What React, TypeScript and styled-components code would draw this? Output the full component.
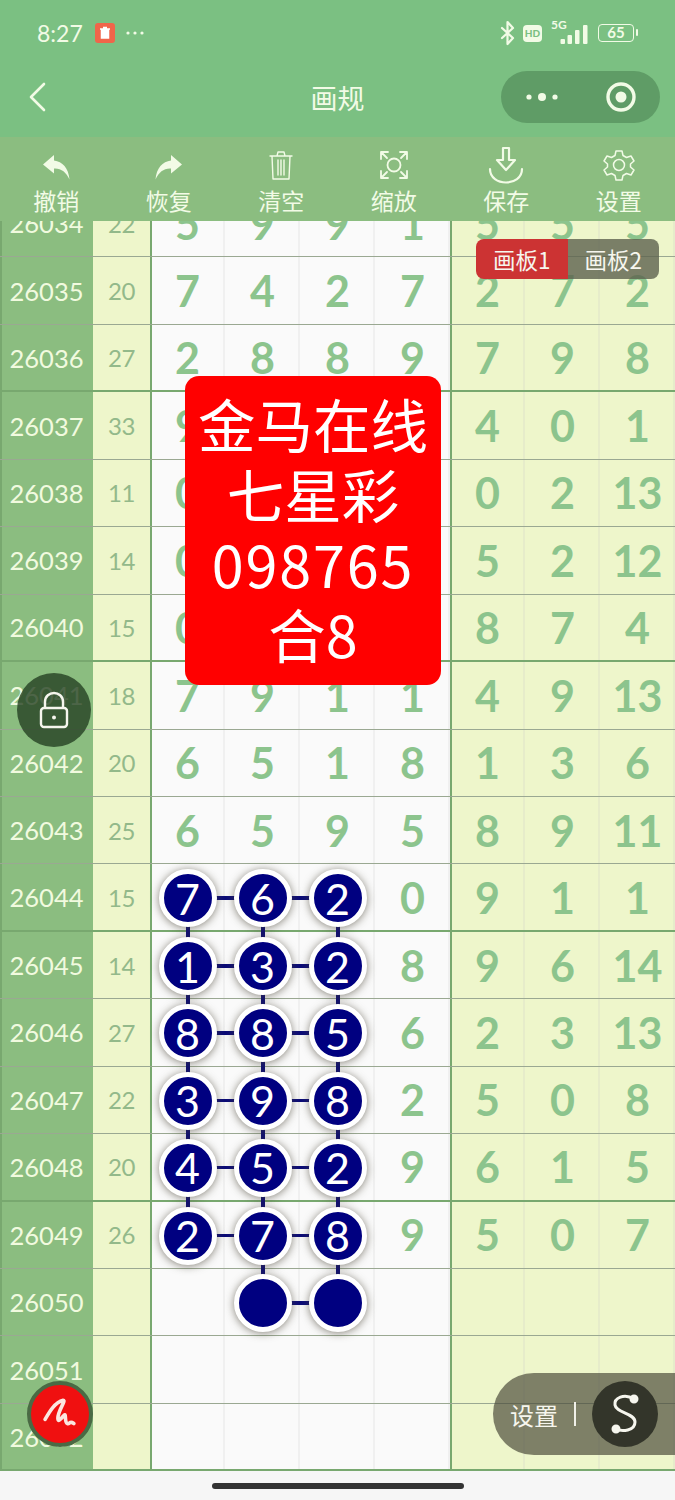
import React from 'react';
import styled, { createGlobalStyle } from 'styled-components';

const CJK = '"Noto Sans CJK SC", "Noto Sans", sans-serif';
const NUM = 'Lato, "Noto Sans CJK SC", sans-serif';

const GlobalStyle = createGlobalStyle`
  html, body { margin: 0; padding: 0; background: #f6f6f6; }
  * { box-sizing: border-box; }
`;

const Page = styled.div`
  position: relative;
  width: 675px;
  height: 1500px;
  display: flex;
  flex-direction: column;
  overflow: hidden;
  font-family: ${CJK};
`;

const Header = styled.header`
  height: 137px;
  background: #7bc082;
  color: #f2fbe6;
  display: flex;
  flex-direction: column;
`;

const StatusBar = styled.div`
  height: 68px;
  padding: 0 41px 2px 37px;
  display: flex;
  align-items: center;
  justify-content: space-between;
`;

const StatusGroup = styled.div`
  display: flex;
  align-items: center;
`;

const Time = styled.span`
  font: 400 23px ${NUM};
  margin-right: 12px;
`;

const NavBar = styled.div`
  height: 60px;
  padding: 0 15px 2px 29px;
  display: flex;
  align-items: center;
  justify-content: space-between;
  position: relative;
`;

const Title = styled.h1`
  margin: 0;
  font: 400 27px ${CJK};
  position: absolute;
  left: 0;
  right: 0;
  text-align: center;
  pointer-events: none;
`;

const Capsule = styled.div`
  width: 159px;
  height: 52px;
  border-radius: 26px;
  background: #5f9c66;
  display: flex;
  align-items: center;
  justify-content: space-between;
  padding: 0 24px;
`;

const Toolbar = styled.nav`
  height: 84px;
  background: #8bbd80;
  display: grid;
  grid-template-columns: repeat(6, 1fr);
`;

const ToolButton = styled.div`
  display: flex;
  flex-direction: column;
  align-items: center;
  color: #f2fbe6;
`;

const ToolIcon = styled.div`
  height: 49px;
  padding-top: 6px;
  display: flex;
  align-items: center;
  justify-content: center;
`;

const ToolLabel = styled.span`
  font: 400 23px/29px ${CJK};
`;

const Board = styled.main`
  position: relative;
  flex: 1;
  overflow: hidden;
  background: #fafafa;
`;

const Rows = styled.div`
  margin-top: -31px;
`;

const Row = styled.div<{ $thick: boolean }>`
  height: 67.44px;
  display: grid;
  grid-template-columns: 93px 57px repeat(7, 75px);
  border-bottom: ${p => (p.$thick ? '2px solid #78a86f' : '1px solid #9aa892')};
`;

const IdCell = styled.div`
  background: #8bbd80;
  color: #f1fadf;
  font: 400 25.5px ${NUM};
  display: flex;
  align-items: center;
  justify-content: center;
  box-shadow: inset 2px 0 0 #78a86f;
`;

const SumCell = styled.div`
  background: #eef6cb;
  color: #93b98a;
  font: 400 24px ${NUM};
  letter-spacing: -0.5px;
  display: flex;
  align-items: center;
  justify-content: center;
`;

const Cell = styled.div<{ $yellow?: boolean; $edge?: boolean }>`
  position: relative;
  background: ${p => (p.$yellow ? '#eef6cb' : '#fafafa')};
  color: #8cc48d;
  font: 700 43px ${NUM};
  display: flex;
  align-items: center;
  justify-content: center;
  box-shadow: ${p => (p.$edge ? 'inset 2px 0 0 #78a86f, ' : '')}inset -2px 0 0 ${p => (p.$yellow ? '#e6ecca' : '#f0f0f0')};
`;

const Ball = styled.div`
  position: absolute;
  left: 50%;
  top: 50%;
  width: 58px;
  height: 58px;
  margin: -28px 0 0 -29px;
  border-radius: 50%;
  background: #000080;
  border: 5px solid #fff;
  box-shadow: 0 1px 8px rgba(70, 66, 50, 0.65);
  color: #fff;
  font: 400 43px ${NUM};
  display: flex;
  align-items: center;
  justify-content: center;
  z-index: 2;
`;

const LinkRight = styled.i`
  position: absolute;
  left: 50%;
  top: 50%;
  width: 75px;
  height: 3.5px;
  margin-top: -1px;
  background: #0c0c78;
  z-index: 1;
`;

const LinkUp = styled.i`
  position: absolute;
  left: 50%;
  bottom: 50%;
  width: 3.5px;
  height: 67px;
  margin-left: -1.5px;
  background: #0c0c78;
  z-index: 1;
`;

const BoardTabs = styled.div`
  position: absolute;
  top: 18px;
  right: 16px;
  width: 183px;
  height: 40px;
  display: flex;
  border-radius: 8px;
  overflow: hidden;
  z-index: 3;
`;

const BoardTab = styled.div<{ $active?: boolean }>`
  flex: 1;
  background: ${p => (p.$active ? '#cc3333' : 'rgba(92, 98, 78, 0.8)')};
  color: #f6f6ee;
  font: 400 22.5px ${CJK};
  display: flex;
  align-items: center;
  justify-content: center;
`;

const Notice = styled.div`
  position: absolute;
  left: 185px;
  top: 155px;
  width: 256px;
  height: 309px;
  padding-top: 12px;
  background: #ff0000;
  border-radius: 14px;
  color: #fff;
  font: 400 57.5px/70px ${CJK};
  text-align: center;
  z-index: 4;
`;

const NoticeDigits = styled.span`
  letter-spacing: 1.8px;
`;

const LockButton = styled.div`
  position: absolute;
  left: 17px;
  top: 452px;
  width: 74px;
  height: 74px;
  border-radius: 50%;
  background: rgba(36, 64, 34, 0.8);
  display: flex;
  align-items: center;
  justify-content: center;
  z-index: 4;
`;

const PenButton = styled.div`
  position: absolute;
  left: 27px;
  top: 1160px;
  width: 66px;
  height: 66px;
  border-radius: 50%;
  background: #f01010;
  border: 4px solid #4a6a44;
  display: flex;
  align-items: center;
  justify-content: center;
  z-index: 4;
`;

const SettingsPill = styled.div`
  position: absolute;
  right: 0;
  top: 1152px;
  width: 182px;
  height: 82px;
  border-radius: 41px 0 0 41px;
  background: rgba(72, 72, 56, 0.68);
  display: flex;
  align-items: center;
  padding: 0 16px 0 17px;
  color: #f6f6ee;
  font: 400 24px ${CJK};
  z-index: 4;
`;

const PillRule = styled.span`
  width: 2px;
  height: 24px;
  margin: 0 16px;
  background: #f0f0e8;
`;

const PillIcon = styled.div`
  width: 66px;
  height: 66px;
  border-radius: 50%;
  background: #33352a;
  display: flex;
  align-items: center;
  justify-content: center;
`;

const HomeBar = styled.footer`
  height: 29px;
  background: #f6f6f6;
  display: flex;
  align-items: center;
  justify-content: center;
`;

const HomeIndicator = styled.div`
  width: 252px;
  height: 6px;
  border-radius: 3px;
  background: #333;
`;

const HdBadge = styled.span`
  width: 19px;
  height: 17px;
  margin: 0 9px 0 8px;
  border-radius: 4px;
  background: #f2fbe6;
  color: #7bc082;
  font: 900 10px/17px ${NUM};
  text-align: center;
`;

const Signal = styled.div`
  display: flex;
  align-items: flex-end;
  position: relative;
  width: 37px;
  height: 24px;
  margin-right: 10px;
`;

const FiveG = styled.span`
  position: absolute;
  left: 0;
  top: -2px;
  font: 700 12px/12px ${NUM};
`;

const Battery = styled.div`
  width: 36px;
  height: 18px;
  border: 1.5px solid #f2fbe6;
  border-radius: 4px;
  font: 700 15px/15px ${NUM};
  text-align: center;
  position: relative;
  &::after {
    content: '';
    position: absolute;
    right: -5px;
    top: 4px;
    width: 2px;
    height: 7px;
    border-radius: 1px;
    background: #f2fbe6;
  }
`;

type RowData = { id: number; sum?: number; left: (number | string)[]; right: (number | string)[] };

const rows: RowData[] = [
  { id: 26034, sum: 22, left: [5, 9, 9, 1], right: [5, 5, 5] },
  { id: 26035, sum: 20, left: [7, 4, 2, 7], right: [2, 7, 2] },
  { id: 26036, sum: 27, left: [2, 8, 8, 9], right: [7, 9, 8] },
  { id: 26037, sum: 33, left: [9, 9, 9, 9], right: [4, 0, 1] },
  { id: 26038, sum: 11, left: [0, 0, 0, 0], right: [0, 2, 13] },
  { id: 26039, sum: 14, left: [0, 0, 0, 0], right: [5, 2, 12] },
  { id: 26040, sum: 15, left: [0, 0, 0, 0], right: [8, 7, 4] },
  { id: 26041, sum: 18, left: [7, 9, 1, 1], right: [4, 9, 13] },
  { id: 26042, sum: 20, left: [6, 5, 1, 8], right: [1, 3, 6] },
  { id: 26043, sum: 25, left: [6, 5, 9, 5], right: [8, 9, 11] },
  { id: 26044, sum: 15, left: [7, 6, 2, 0], right: [9, 1, 1] },
  { id: 26045, sum: 14, left: [1, 3, 2, 8], right: [9, 6, 14] },
  { id: 26046, sum: 27, left: [8, 8, 5, 6], right: [2, 3, 13] },
  { id: 26047, sum: 22, left: [3, 9, 8, 2], right: [5, 0, 8] },
  { id: 26048, sum: 20, left: [4, 5, 2, 9], right: [6, 1, 5] },
  { id: 26049, sum: 26, left: [2, 7, 8, 9], right: [5, 0, 7] },
  { id: 26050, left: ['', '', '', ''], right: ['', '', ''] },
  { id: 26051, left: ['', '', '', ''], right: ['', '', ''] },
  { id: 26052, left: ['', '', '', ''], right: ['', '', ''] },
];

const isMarked = (id: number, col: number) => {
  if (id >= 26044 && id <= 26049) return col <= 2;
  if (id === 26050) return col === 1 || col === 2;
  return false;
};

const Stroke = ({ w, h, children, sw = 2 }: { w: number; h: number; children: React.ReactNode; sw?: number }) => (
  <svg width={w} height={h} viewBox={`0 0 ${w} ${h}`} fill="none" stroke="currentColor" strokeWidth={sw} strokeLinecap="round" strokeLinejoin="round">
    {children}
  </svg>
);

const tools: { label: string; icon: React.ReactNode }[] = [
  {
    label: '撤销',
    icon: (
      <svg width="30" height="32" viewBox="0 -4 30 32" fill="currentColor">
        <path d="M13 2 L2 11.5 L13 20.5 V15.5 C20 15 25 19 28.5 26.5 C27.5 15 21.5 8.5 13 7.5 Z" />
      </svg>
    ),
  },
  {
    label: '恢复',
    icon: (
      <svg width="30" height="32" viewBox="0 -4 30 32" fill="currentColor">
        <path d="M17 2 L28 11.5 L17 20.5 V15.5 C10 15 5 19 1.5 26.5 C2.5 15 8.5 8.5 17 7.5 Z" />
      </svg>
    ),
  },
  {
    label: '清空',
    icon: (
      <Stroke w={26} h={32} sw={1.4}>
        <path d="M2 7 H24 M9 7 L10 3 H16 L17 7 M4 7 L5 30 H21 L22 7 M10 11 V26 M13 11 V26 M16 11 V26" />
      </Stroke>
    ),
  },
  {
    label: '缩放',
    icon: (
      <Stroke w={32} h={32} sw={1.8}>
        <circle cx="16" cy="16" r="6.5" />
        <path d="M3 10 V3 H10 M3 3 L9 9 M22 3 H29 V10 M29 3 L23 9 M3 22 V29 H10 M3 29 L9 23 M22 29 H29 V22 M29 29 L23 23" />
      </Stroke>
    ),
  },
  {
    label: '保存',
    icon: (
      <Stroke w={38} h={40} sw={2.2}>
        <path d="M16 3 H22 V15 H28 L19 25 L10 15 H16 Z" />
        <path d="M3 24 C3 42 35 42 35 24" />
      </Stroke>
    ),
  },
  {
    label: '设置',
    icon: (
      <Stroke w={32} h={32} sw={1.5}>
        <circle cx="16" cy="16" r="5.5" />
        <path d="M13 2 H19 L20 6.5 L23.5 8.5 L28 7 L31 12 L27.5 15 V18 L31 21 L28 26 L23.5 24.5 L20 26.5 L19 31 H13 L12 26.5 L8.5 24.5 L4 26 L1 21 L4.5 18 V15 L1 12 L4 7 L8.5 8.5 L12 6.5 Z" />
      </Stroke>
    ),
  },
];

export default function App() {
  return (
    <Page>
      <GlobalStyle />
      <Header>
        <StatusBar>
          <StatusGroup>
            <Time>8:27</Time>
            <svg width="20" height="20" viewBox="0 0 20 20">
              <rect width="20" height="20" rx="3" fill="#f0654a" />
              <path d="M5 6 H15 M6.5 7.5 H13.5 V15 H6.5 Z M8 4.5 H12" stroke="#fff" strokeWidth="1.5" fill="#fff" />
            </svg>
            <svg width="20" height="6" viewBox="0 0 20 6" fill="currentColor" style={{ marginLeft: 10 }}>
              <circle cx="3" cy="3" r="1.6" />
              <circle cx="10" cy="3" r="1.6" />
              <circle cx="17" cy="3" r="1.6" />
            </svg>
          </StatusGroup>
          <StatusGroup>
            <Stroke w={15} h={26} sw={2.2}>
              <path d="M2 8 L13 18 L7.5 24 V2 L13 8 L2 18" />
            </Stroke>
            <HdBadge>HD</HdBadge>
            <Signal>
              <FiveG>5G</FiveG>
              <svg width="37" height="24" viewBox="0 0 37 24" fill="currentColor">
                <rect x="9.5" y="18" width="4.5" height="5" rx="1" />
                <rect x="16.5" y="14" width="4.5" height="9" rx="1" />
                <rect x="24" y="9" width="4.5" height="14" rx="1" />
                <rect x="32" y="4" width="4.5" height="19" rx="1" />
              </svg>
            </Signal>
            <Battery>65</Battery>
          </StatusGroup>
        </StatusBar>
        <NavBar>
          <Stroke w={18} h={30} sw={2.6}>
            <path d="M15 2 L2 15 L15 28" />
          </Stroke>
          <Title>画规</Title>
          <Capsule>
            <svg width="34" height="12" viewBox="0 0 34 12" fill="#f2fbe6">
              <circle cx="4" cy="6" r="2.6" />
              <circle cx="17" cy="6" r="4" />
              <circle cx="30" cy="6" r="2.6" />
            </svg>
            <svg width="30" height="30" viewBox="0 0 30 30">
              <circle cx="15" cy="15" r="13" fill="none" stroke="#f2fbe6" strokeWidth="3.4" />
              <circle cx="15" cy="15" r="5.5" fill="#f2fbe6" />
            </svg>
          </Capsule>
        </NavBar>
      </Header>

      <Toolbar>
        {tools.map(t => (
          <ToolButton key={t.label}>
            <ToolIcon>{t.icon}</ToolIcon>
            <ToolLabel>{t.label}</ToolLabel>
          </ToolButton>
        ))}
      </Toolbar>

      <Board>
        <Rows>
          {rows.map(r => {
            const thick = (r.id - 26036) % 4 === 0;
            return (
              <Row key={r.id} $thick={thick}>
                <IdCell>{r.id}</IdCell>
                <SumCell>{r.sum}</SumCell>
                {r.left.map((v, i) => (
                  <Cell key={i} $edge={i === 0}>
                    {isMarked(r.id, i) ? (
                      <>
                        {isMarked(r.id, i + 1) && <LinkRight />}
                        {isMarked(r.id - 1, i) && <LinkUp />}
                        <Ball>{v}</Ball>
                      </>
                    ) : (
                      v
                    )}
                  </Cell>
                ))}
                {r.right.map((v, i) => (
                  <Cell key={i} $yellow $edge={i === 0}>
                    {v}
                  </Cell>
                ))}
              </Row>
            );
          })}
        </Rows>

        <BoardTabs>
          <BoardTab $active>画板1</BoardTab>
          <BoardTab>画板2</BoardTab>
        </BoardTabs>

        <Notice>
          金马在线
          <br />
          七星彩
          <br />
          <NoticeDigits>098765</NoticeDigits>
          <br />
          合8
        </Notice>

        <LockButton>
          <svg width="30" height="38" viewBox="0 0 30 38" fill="none" stroke="#f6f6ee" strokeWidth="2.4" strokeLinejoin="round">
            <path d="M6 17 V11 C6 -1 24 -1 24 11 V17" />
            <rect x="2" y="17" width="26" height="19" rx="3" />
            <circle cx="15" cy="26.5" r="2" fill="#f6f6ee" stroke="none" />
          </svg>
        </LockButton>

        <PenButton>
          <svg width="34" height="34" viewBox="0 0 32 32" fill="none" stroke="#fbe6e0" strokeWidth="3.4" strokeLinecap="round" strokeLinejoin="round">
            <path d="M2 21 C6 14 11 5 19 3 C22 3 14 13 14 20 C14 25 18 19 20 17 C22 15 20 24 23 25 C25 26 25 22 29 25" />
          </svg>
        </PenButton>

        <SettingsPill>
          设置
          <PillRule />
          <PillIcon>
            <svg width="30" height="42" viewBox="0 0 30 42" fill="none" stroke="#f6f6ee" strokeWidth="3" strokeLinecap="round">
              <path d="M24 6 C14 0 4 5 5 12 C6 20 25 20 25 29 C25 38 12 39 6 36" />
              <circle cx="24" cy="6" r="3" fill="#f6f6ee" />
              <circle cx="6" cy="36" r="3" fill="#f6f6ee" />
            </svg>
          </PillIcon>
        </SettingsPill>
      </Board>

      <HomeBar>
        <HomeIndicator />
      </HomeBar>
    </Page>
  );
}
